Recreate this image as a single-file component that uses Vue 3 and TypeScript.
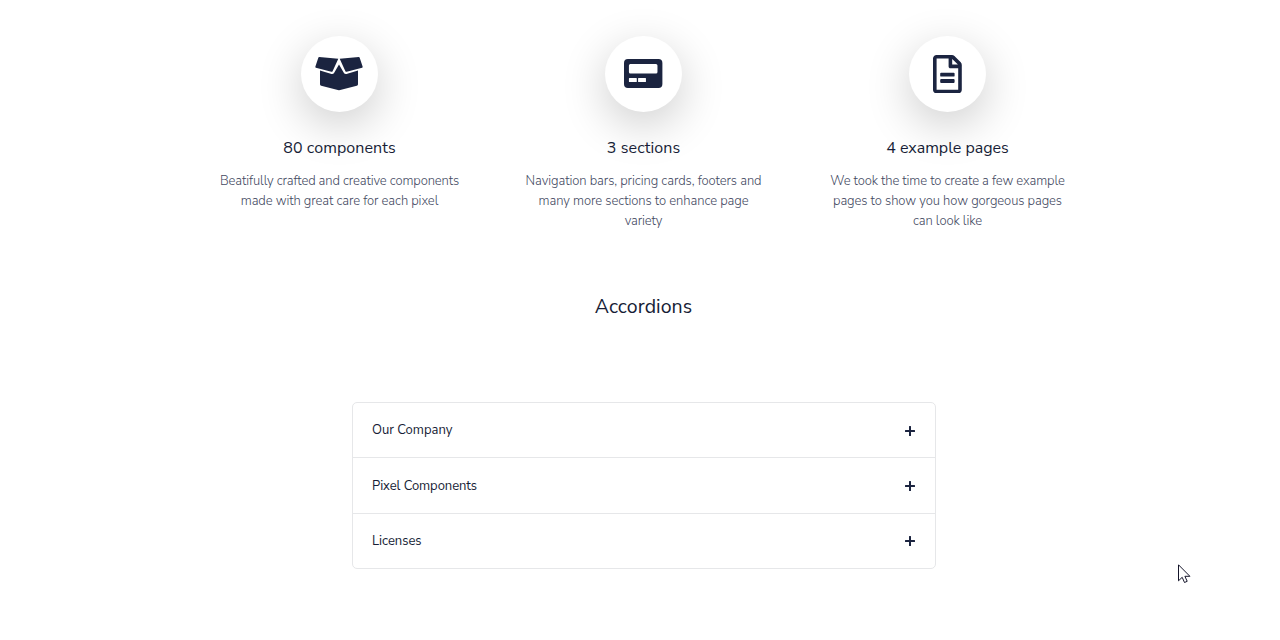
<script setup lang="ts">
import type { Directive } from 'vue'

interface Line { text: string; width: number }
interface Feature { icon: 'box' | 'card' | 'file'; title: Line; lines: Line[] }

const features: Feature[] = [
  {
    icon: 'box',
    title: { text: '80 components', width: 112.5 },
    lines: [
      { text: 'Beatifully crafted and creative components', width: 239 },
      { text: 'made with great care for each pixel', width: 197.5 },
    ],
  },
  {
    icon: 'card',
    title: { text: '3 sections', width: 73.5 },
    lines: [
      { text: 'Navigation bars, pricing cards, footers and', width: 236 },
      { text: 'many more sections to enhance page', width: 210 },
      { text: 'variety', width: 37.5 },
    ],
  },
  {
    icon: 'file',
    title: { text: '4 example pages', width: 122.5 },
    lines: [
      { text: 'We took the time to create a few example', width: 234.5 },
      { text: 'pages to show you how gorgeous pages', width: 229 },
      { text: 'can look like', width: 69 },
    ],
  },
]

const panels: Line[] = [
  { text: 'Our Company', width: 80.5 },
  { text: 'Pixel Components', width: 105 },
  { text: 'Licenses', width: 49.5 },
]

// Tracks a line of text out (or in) to a set measure.
const vMeasure: Directive<HTMLElement, number> = {
  mounted(el, { value }) {
    const natural = el.getBoundingClientRect().width
    const count = el.textContent?.length ?? 1
    el.style.letterSpacing = `${(value - natural) / count}px`
  },
}
</script>

<template>
  <main class="page">
    <section class="features">
      <article v-for="f in features" :key="f.icon" class="feature">
        <div class="badge">
          <svg v-if="f.icon === 'box'" class="box" width="48" height="34" viewBox="0 0 48 34">
            <path d="M4.200 0 23.300 1.700 17.600 14.200Q17.200 15 16.300 14.800L.9 10.700Q0 10.400.4 9.500L3.400.6Q3.600 0 4.200 0ZM43.800 0 24.700 1.700 30.400 14.200Q30.800 15 31.700 14.800L47.100 10.700Q48 10.400 47.600 9.500L44.600.6Q44.400 0 43.800 0ZM5 13.600 16.500 16.900Q18.300 17.300 19.200 15.800L24 7.600 28.800 15.800Q29.700 17.300 31.500 16.900L43 13.600V27.200Q43 28.400 41.800 28.800L25.200 33Q24 33.300 22.800 33L6.200 28.800Q5 28.400 5 27.200Z" />
          </svg>
          <svg v-else-if="f.icon === 'card'" width="38.400" height="29" viewBox="0 0 39 29" preserveAspectRatio="none">
            <path fill-rule="evenodd" d="M4 0h31a4 4 0 0 1 4 4v21a4 4 0 0 1-4 4H4a4 4 0 0 1-4-4V4a4 4 0 0 1 4-4ZM6.500 5A1.500 1.500 0 0 0 5 6.500v6.500A1.500 1.500 0 0 0 6.500 14.500h26a1.500 1.500 0 0 0 1.500-1.500v-6.500A1.500 1.500 0 0 0 32.500 5ZM5.500 19a.5.5 0 0 0-.5.5v3a.5.5 0 0 0 .5.5h7a.5.5 0 0 0 .5-.5v-3a.5.5 0 0 0-.5-.5ZM14.800 19a.5.5 0 0 0-.5.5v3a.5.5 0 0 0 .5.5h7a.5.5 0 0 0 .5-.5v-3a.5.5 0 0 0-.5-.5Z" />
          </svg>
          <svg v-else class="file" width="28.8" height="38.4" viewBox="0 0 384 512">
            <path d="M288 248v28c0 6.600-5.400 12-12 12H108c-6.600 0-12-5.400-12-12v-28c0-6.600 5.400-12 12-12h168c6.600 0 12 5.400 12 12zm-12 72H108c-6.600 0-12 5.400-12 12v28c0 6.600 5.400 12 12 12h168c6.600 0 12-5.400 12-12v-28c0-6.600-5.400-12-12-12zm108-188.100V464c0 26.500-21.500 48-48 48H48c-26.500 0-48-21.500-48-48V48C0 21.500 21.500 0 48 0h204.100C264.800 0 277 5.100 286 14.100L369.900 98c9 8.900 14.100 21.200 14.100 33.900zm-128-80V128h76.100L256 51.900zM336 464V176H232c-13.300 0-24-10.700-24-24V48H48v416h288z" />
          </svg>
        </div>
        <h3><span v-measure="f.title.width">{{ f.title.text }}</span></h3>
        <p>
          <template v-for="l in f.lines" :key="l.text"><span v-measure="l.width">{{ l.text }}</span><br></template>
        </p>
      </article>
    </section>

    <h2><span v-measure="97.500">Accordions</span></h2>

    <section class="accordion">
      <button v-for="p in panels" :key="p.text" class="panel" type="button">
        <span v-measure="p.width">{{ p.text }}</span>
        <svg class="plus" width="10" height="10" viewBox="0 0 10 10"><path d="M4 .5Q4 0 4.500 0h1Q6 0 6 .5V4h3.500q.5 0 .5.5v1q0 .5-.5.5H6v3.500q0 .5-.5.5h-1Q4 10 4 9.500V6H.5Q0 6 0 5.500v-1Q0 4 .5 4H4z" /></svg>
      </button>
    </section>

    <svg class="cursor" width="13" height="20" viewBox="0 0 13 20">
      <path d="M.5.8v16l3.700-3.500 2.300 5.200 2.700-1.200-2.300-5h5z" />
    </svg>
  </main>
</template>

<style>
body {
  margin: 0;
  background: #fff;
}
</style>

<style scoped>
.page {
  box-sizing: border-box;
  height: 640px;
  padding: 36px 0 0 187.5px;
  overflow: hidden;
  color: #171d36;
  font-family: "Nunito Sans", Nunito, Lato, sans-serif;
}
svg {
  display: block;
  fill: #1b2440;
}
.features {
  display: grid;
  grid-template-columns: repeat(3, 304px);
  height: 255px;
}
.feature {
  position: relative;
  text-align: center;
}
.badge {
  box-sizing: border-box;
  display: flex;
  align-items: center;
  justify-content: center;
  width: 76.8px;
  height: 76px;
  margin: 0 auto;
  padding-bottom: 1px;
  border-radius: 50%;
  background: #fff;
  box-shadow: 0 12.8px 46px rgba(0, 0, 0, 0.2);
}
.box,
.file {
  margin-top: 1px;
}
span {
  display: inline-block;
  white-space: nowrap;
}
h3 {
  position: relative;
  margin: 25px 0 0;
  font-size: 16px;
  font-weight: 400;
  line-height: 22px;
}
p {
  margin: 12px 0 0;
  color: #444a62;
  font-size: 13px;
  font-weight: 300;
  line-height: 20px;
}
h2 {
  width: 912px;
  margin: 0;
  font-size: 19.5px;
  font-weight: 400;
  line-height: 32px;
  text-align: center;
}
.accordion {
  box-sizing: border-box;
  width: 584px;
  height: 167px;
  margin: 79px 0 0 164.5px;
  border: 1px solid #e6e7e9;
  border-radius: 5px;
}
.panel {
  box-sizing: border-box;
  display: flex;
  align-items: center;
  justify-content: space-between;
  width: 100%;
  height: 54px;
  padding: 0 19.7px 0 19px;
  border: 0;
  background: none;
  color: inherit;
  font: 400 13px/20px "Nunito Sans", Nunito, Lato, sans-serif;
}
.panel + .panel {
  height: 56px;
  padding-top: 1px;
  border-top: 1px solid #e6e7e9;
}
.panel + .panel + .panel {
  height: 55px;
  padding-top: 0;
}
.panel:first-child .plus {
  margin-top: 2px;
}
.cursor {
  position: absolute;
  left: 1178px;
  top: 563.5px;
}
.cursor path {
  fill: #fff;
  stroke: #15152a;
  stroke-width: 1;
}
</style>
